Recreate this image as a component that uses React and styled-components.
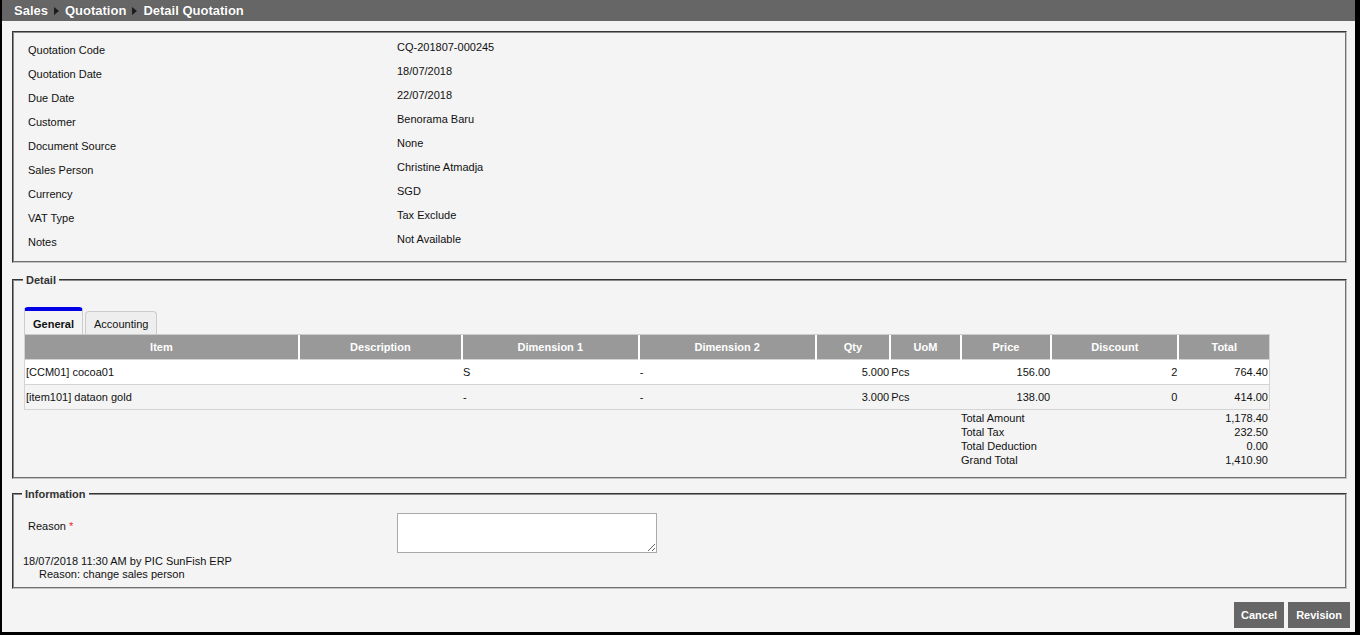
import React from "react";
import styled, { createGlobalStyle } from "styled-components";

const GlobalStyle = createGlobalStyle`
  html, body {
    margin: 0;
    padding: 0;
    background: #000;
  }
  body {
    font-family: "Liberation Sans", Arial, sans-serif;
    font-size: 11px;
    color: #111;
  }
`;

const Page = styled.div`
  box-sizing: border-box;
  width: 1360px;
  height: 635px;
  border-left: 2px solid #000;
  border-right: 5px solid #000;
  border-bottom: 3px solid #000;
  background: #f4f4f4;
  display: flex;
  flex-direction: column;
  overflow: hidden;
`;

const Breadcrumb = styled.div`
  height: 21px;
  background: #666;
  display: flex;
  align-items: center;
  gap: 5px;
  padding-left: 12px;
  color: #fff;
  font-weight: bold;
  font-size: 13px;
  text-shadow: 0 0 1px rgba(0, 0, 0, 0.4);
`;

const Arrow = styled.span`
  width: 0;
  height: 0;
  border-top: 4px solid transparent;
  border-bottom: 4px solid transparent;
  border-left: 5px solid #1c1c1c;
  margin: 1px 1px 0;
`;

const Content = styled.div`
  flex: 1;
  display: flex;
  flex-direction: column;
  padding: 10px 8px 0 10px;
`;

const Box = styled.fieldset`
  margin: ${(p) => p.$mt || 0}px 0 0 0;
  padding: ${(p) => p.$pad || "0 10px"};
  border: 2px groove #c4c4c4;
  border-top-color: #8a8a8a;
  border-left-color: #8a8a8a;
  min-width: 0;
`;

const Legend = styled.legend`
  font-weight: bold;
  color: #333;
  padding: 0 3px;
  margin-left: -1px;
  font-size: 11px;
`;

const InfoRow = styled.div`
  display: grid;
  grid-template-columns: 369px 1fr;
  height: 24px;
  padding-left: 4px;
`;

const Label = styled.div`
  padding-top: 6px;
  line-height: 13px;
`;

const Value = styled.div`
  padding-top: 3px;
  line-height: 13px;
`;

const Tabs = styled.div`
  display: flex;
  align-items: flex-end;
  gap: 2px;
  margin-top: 21px;
  width: 1246px;
  border-bottom: 1px solid #ccc;
`;

const Tab = styled.div`
  box-sizing: border-box;
  height: ${(p) => (p.$active ? 27 : 23)}px;
  padding: 0 8px;
  display: flex;
  align-items: center;
  padding-top: ${(p) => (p.$active ? 3 : 1)}px;
  border: 1px solid #ccc;
  border-bottom: none;
  border-top: ${(p) => (p.$active ? "4px solid #0000e6" : "1px solid #ccc")};
  border-radius: 4px 4px 0 0;
  background: ${(p) => (p.$active ? "#f4f4f4" : "#eeeeee")};
  font-weight: ${(p) => (p.$active ? "bold" : "normal")};
  color: #111;
`;

const Table = styled.table`
  width: 1246px;
  border-collapse: collapse;
  border: 1px solid #d4d4d4;
  border-top: none;
`;

const Th = styled.th`
  background: #999;
  color: #fff;
  font-weight: bold;
  height: 24px;
  padding: 0;
  text-align: center;
  border-left: 2px solid #fff;
  width: ${(p) => p.$w}px;
  &:first-child {
    border-left: none;
  }
`;

const Tr = styled.tr`
  background: ${(p) => (p.$alt ? "#f4f4f4" : "#fff")};
  border-top: 1px solid #d4d4d4;
`;

const Td = styled.td`
  height: 24px;
  padding: 0 1px;
  text-align: ${(p) => p.$align || "left"};
`;

const Totals = styled.div`
  width: 1246px;
  display: grid;
  grid-template-columns: 937px 1fr auto;
  line-height: 14px;
  padding: 1px 0 10px;
`;

const TotalLabel = styled.div`
  grid-column: 2;
`;

const TotalValue = styled.div`
  grid-column: 3;
  text-align: right;
  padding-right: 2px;
`;

const ReasonRow = styled.div`
  display: grid;
  grid-template-columns: 374px 1fr;
  padding-top: 13px;
`;

const ReasonLabel = styled.div`
  padding: 7px 0 0 5px;
  line-height: 13px;
`;

const Required = styled.span`
  color: #e0301e;
`;

const ReasonInput = styled.textarea`
  display: block;
  box-sizing: border-box;
  width: 260px;
  height: 40px;
  margin: 0;
  border: 1px solid #aaa;
  background: #fff;
  resize: both;
  font-family: inherit;
  font-size: 11px;
`;

const Log = styled.div`
  line-height: 13px;
  padding: 2px 0 6px 0;
`;

const LogReason = styled.div`
  padding-left: 16px;
`;

const Actions = styled.div`
  display: flex;
  justify-content: flex-end;
  gap: 4px;
  margin: 13px -3px 0 0;
`;

const Button = styled.button`
  height: 26px;
  padding: 0 ${(p) => p.$px || 8}px;
  border: none;
  background: #666;
  color: #fff;
  font-family: inherit;
  font-weight: bold;
  font-size: 11px;
  cursor: pointer;
`;

const info = [
  ["Quotation Code", "CQ-201807-000245"],
  ["Quotation Date", "18/07/2018"],
  ["Due Date", "22/07/2018"],
  ["Customer", "Benorama Baru"],
  ["Document Source", "None"],
  ["Sales Person", "Christine Atmadja"],
  ["Currency", "SGD"],
  ["VAT Type", "Tax Exclude"],
  ["Notes", "Not Available"],
];

const columns = [
  ["Item", 275],
  ["Description", 162],
  ["Dimension 1", 176],
  ["Dimension 2", 176],
  ["Qty", 73],
  ["UoM", 69],
  ["Price", 89],
  ["Discount", 126],
  ["Total", 90],
];

const rows = [
  ["[CCM01] cocoa01", "", "S", "-", "5.000", "Pcs", "156.00", "2", "764.40"],
  ["[item101] dataon gold", "", "-", "-", "3.000", "Pcs", "138.00", "0", "414.00"],
];

const aligns = ["left", "left", "left", "left", "right", "left", "right", "right", "right"];

const totals = [
  ["Total Amount", "1,178.40"],
  ["Total Tax", "232.50"],
  ["Total Deduction", "0.00"],
  ["Grand Total", "1,410.90"],
];

export default function App() {
  return (
    <Page>
      <GlobalStyle />
      <Breadcrumb>
        <span>Sales</span>
        <Arrow />
        <span>Quotation</span>
        <Arrow />
        <span>Detail Quotation</span>
      </Breadcrumb>
      <Content>
        <Box $pad="5px 10px 7px 10px">
          {info.map(([label, value]) => (
            <InfoRow key={label}>
              <Label>{label}</Label>
              <Value>{value}</Value>
            </InfoRow>
          ))}
        </Box>

        <Box $mt={11}>
          <Legend>Detail</Legend>
          <Tabs>
            <Tab $active>General</Tab>
            <Tab>Accounting</Tab>
          </Tabs>
          <Table>
            <thead>
              <tr>
                {columns.map(([name, w]) => (
                  <Th key={name} $w={w}>
                    {name}
                  </Th>
                ))}
              </tr>
            </thead>
            <tbody>
              {rows.map((row, i) => (
                <Tr key={i} $alt={i % 2 === 1}>
                  {row.map((cell, j) => (
                    <Td key={j} $align={aligns[j]}>
                      {cell}
                    </Td>
                  ))}
                </Tr>
              ))}
            </tbody>
          </Table>
          <Totals>
            {totals.map(([label, value]) => (
              <React.Fragment key={label}>
                <TotalLabel>{label}</TotalLabel>
                <TotalValue>{value}</TotalValue>
              </React.Fragment>
            ))}
          </Totals>
        </Box>

        <Box $mt={9} $pad="0 10px 0 9px">
          <Legend>Information</Legend>
          <ReasonRow>
            <ReasonLabel>
              Reason <Required>*</Required>
            </ReasonLabel>
            <div>
              <ReasonInput />
            </div>
          </ReasonRow>
          <Log>
            <div>18/07/2018 11:30 AM by PIC SunFish ERP</div>
            <LogReason>Reason: change sales person</LogReason>
          </Log>
        </Box>

        <Actions>
          <Button $px={7}>Cancel</Button>
          <Button $px={8}>Revision</Button>
        </Actions>
      </Content>
    </Page>
  );
}
